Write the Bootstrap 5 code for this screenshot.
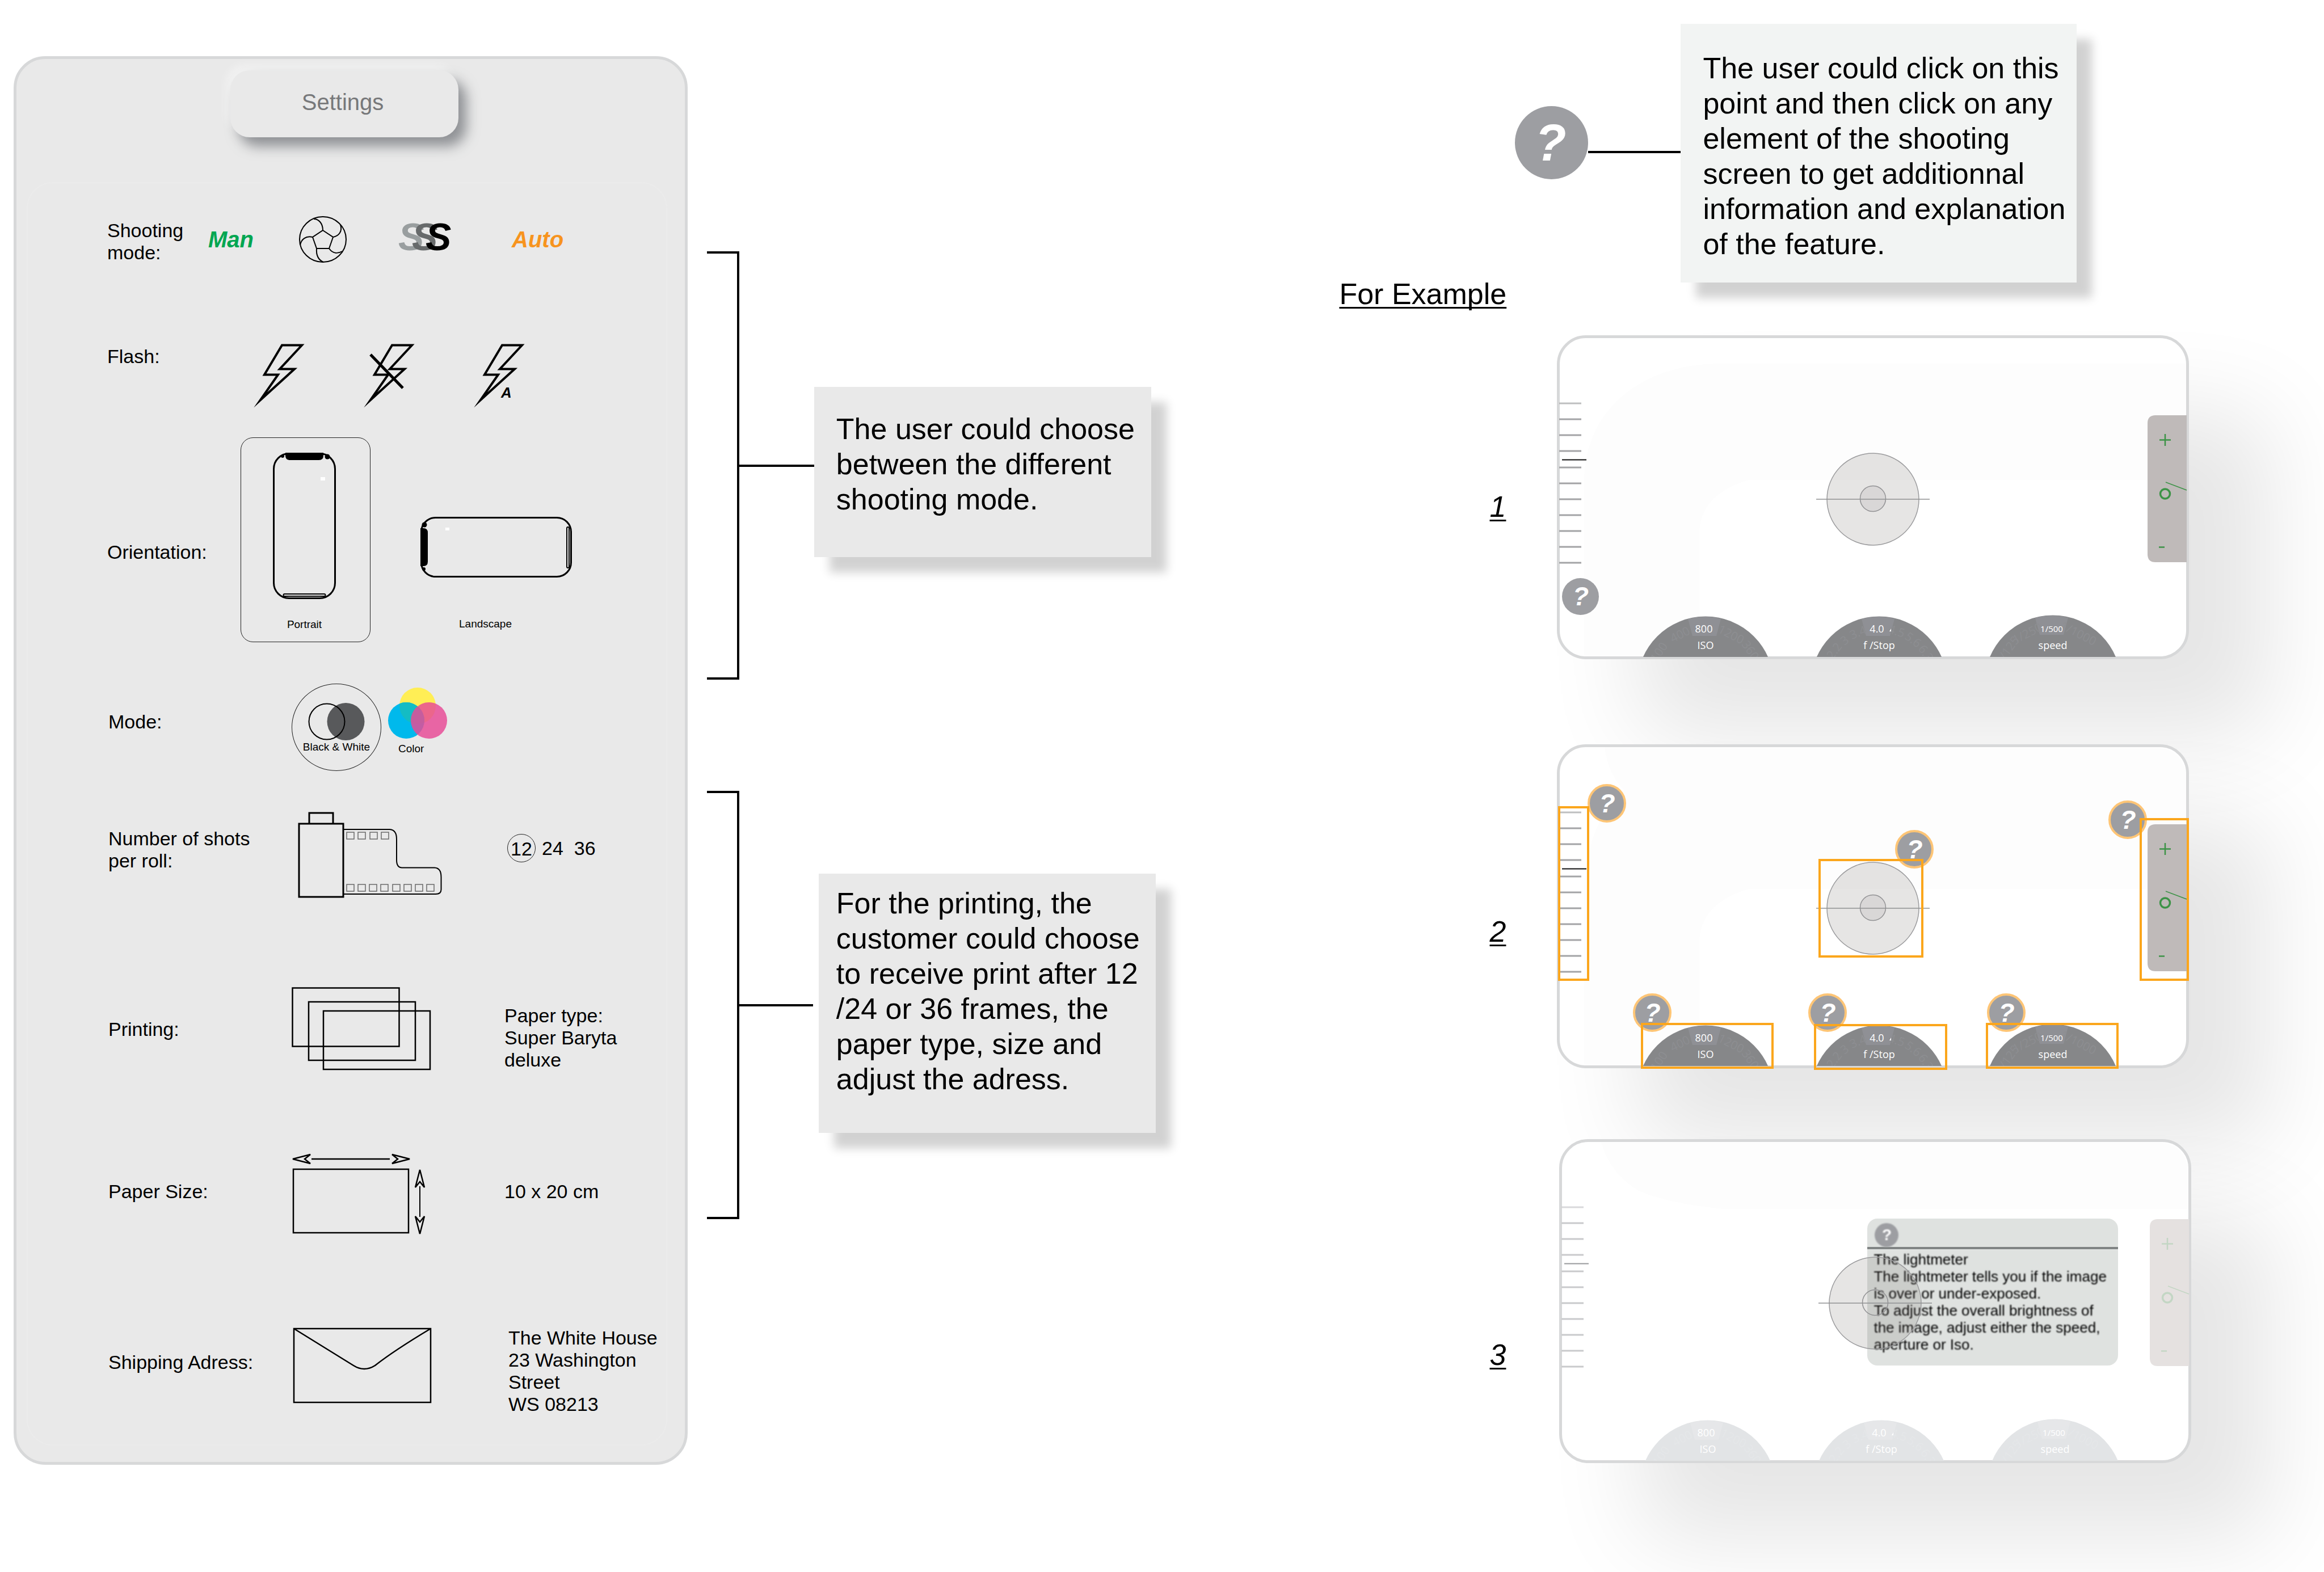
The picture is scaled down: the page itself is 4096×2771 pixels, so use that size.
<!DOCTYPE html>
<html lang="en">
<head>
<meta charset="utf-8">
<meta name="viewport" content="width=device-width, initial-scale=1">
<title>Camera app: settings and help</title>
<link rel="stylesheet" href="https://cdn.jsdelivr.net/npm/bootstrap@5.3.0/dist/css/bootstrap.min.css">
<style>
  body { font-family: "Liberation Sans", Arial, sans-serif; color: #000; background: #fff; }
  main { min-height: 100vh; }
  svg { display: block; flex: none; overflow: visible; }
  .btn { --bs-btn-color: #000; --bs-btn-padding-x: 0; --bs-btn-padding-y: 0; --bs-btn-border-width: 0; --bs-btn-border-radius: 0; text-align: left; }
  .ink { fill: none; stroke: #000; stroke-width: 3; }

  /* settings panel */
  .panel { flex: 0 0 29%; margin: 99px 0 0 24px; padding: 20px 0 29px; background: #e9e9e9; border: 5px solid #d7d8d9; border-radius: 56px; align-self: flex-start; }
  .title-btn { display: block; width: 402px; height: 118px; margin-left: 377px; padding: 0 6px 6px 0; border-radius: 34px; background: #e9e9e9; font-size: 40px; color: #77787a; text-align: center; box-shadow: 14px 16px 22px rgba(95, 98, 104, .65), -8px -10px 16px rgba(255, 255, 255, .4); }
  .panel-body { margin: 79px 31px 0 18px; padding: 55px 0 51px 140px; border: 2px solid #ebebeb; border-radius: 46px; font-size: 34px; line-height: 39px; }
  .setting { display: grid; align-items: start; }
  .setting > h2, .setting > p { font-size: 34px; line-height: 39px; font-weight: 400; margin: 0; padding-top: var(--drop, 0); }
  .print-group { padding-left: 2px; }
  .print-group .setting { grid-template-columns: 323px 375px 1fr; }
  .caption-sm { font-size: 19px; line-height: 24px; }
  .s-shooting { grid-template-columns: 178px 160px 177px 198px auto; align-items: center; height: 82px; }
  .s-shooting h2 { align-self: start; }
  .s-shooting .btn { font-size: 40px; line-height: 40px; font-weight: 700; font-style: italic; }
  .s-flash { grid-template-columns: 264px 194px 194px auto; margin-top: 146px; }
  .s-orient { grid-template-columns: 235px 317px auto; margin-top: 57px; }
  .portrait { width: 229px; height: 361px; padding: 26px 4px 0 0; border: 1px solid #222; border-radius: 22px; }
  .portrait .caption-sm { margin-top: 33px; }
  .landscape { padding-top: 140px; }
  .landscape .caption-sm { margin: 70px 0 0 68px; }
  .s-mode { margin-top: 73px; }
  .print-group .s-mode { grid-template-columns: 323px 170px auto; }
  .bw { width: 158px; height: 154px; padding-top: 34px; border: 1px solid #222; border-radius: 50%; white-space: nowrap; }
  .colour { padding-top: 7px; }
  .colour .caption-sm { margin: 6px 0 0 18px; }
  .s-shots { margin-top: 73px; }
  .shots { padding-top: 38px; gap: 19px; }
  .shots .btn { font-size: 34px; line-height: 50px; }
  .shots .picked { width: 50px; height: 50px; margin-right: -8px; margin-left: 5px; border: 1px solid #222; border-radius: 50%; text-align: center; }
  .s-print { margin-top: 157px; }
  .s-size { margin-top: 146px; }
  .s-ship { margin-top: 162px; }

  /* notes with their connectors */
  .notes { margin: 443px 0 0 34px; }
  .note { font-size: 52px; line-height: 62px; background: #e9e9e9; box-shadow: 27px 27px 16px rgba(0, 0, 0, .18); white-space: nowrap; }
  .brace { width: 57px; height: 755px; border: 4px solid #000; border-left: 0; }
  .lead-line { height: 4px; background: #000; flex: none; }
  .note-a { width: 594px; margin-top: 239px; padding: 43px 0 71px 39px; }
  .note-b { width: 594px; margin: 146px 0 0 10px; padding: 21px 0 64px 31px; }
  .notes .brace-row + .brace-row { margin-top: 196px; }

  /* help examples */
  .examples { margin: 42px 5.8% 0 auto; }
  .side-title { width: 294px; padding-top: 445px; font-size: 52px; line-height: 62px; font-weight: 400; margin: 0; white-space: nowrap; }
  .side-title, .step-no { text-decoration: underline; text-decoration-thickness: 3px; text-underline-offset: 5px; text-decoration-skip-ink: none; }
  .help { background: #9d9ea2; color: #fff; border-radius: 50%; font-weight: 700; font-style: italic; text-align: center; width: 65px; height: 65px; font-size: 46px; line-height: 65px; }
  .help-lg { width: 129px; height: 129px; font-size: 90px; line-height: 126px; margin: 145px 0 0 16px; padding-right: 4px; }
  .note-c { width: 698px; padding: 47px 0 37px 39px; background: #f2f4f3; }
  .step { display: grid; grid-template-columns: 294px 1114px; column-gap: 90px; }
  .step-no { font-size: 52px; line-height: 62px; font-style: italic; text-align: right; padding-top: var(--drop); }
  .viewfinder { height: 571px; border: 5px solid #d7d8d9; border-radius: 51px; background: #fff; box-shadow: 142px 135px 165px rgba(0, 0, 0, .1); }
  .viewfinder > * { position: absolute; }
  .viewfinder > svg { left: -5px; top: -4px; pointer-events: none; }
  .screen-live { --tick: #a3a4a6; --level: #111; --bar: #bfbab9; --sign: #3d9347; --dial: #868789; --wedge: #8f9095; --ghost: #8d8e91; }
  .screen-dim { width: 1114px; --tick: #c9cacc; --level: #999a9c; --bar: #e5e1e0; --sign: #c3d6c4; --dial: #e2e4e6; --wedge: #e6e7e9; --ghost: #e5e7e9; }
  .dial-text { font-family: "Open Sans", "Noto Sans", sans-serif; font-size: 18px; fill: #fff; text-anchor: middle; }
  .dial-ghost { font-family: "Open Sans", "Noto Sans", sans-serif; font-size: 21px; fill: var(--ghost); text-anchor: middle; }
  .ringed { width: 68px; height: 68px; line-height: 60px; border: 4px solid #fec576; transform: translate(-50%, -50%); }
  .tip { left: 538px; top: 135px; width: 442px; height: 259px; background: #dfe2e0; border-radius: 18px; font-size: 26px; line-height: 30px; color: #000; white-space: nowrap; overflow: hidden; }
  .tip-head { height: 54px; padding: 8px 0 0 13px; border-bottom: 4px solid #808484; }
  .tip-head .help { width: 42px; height: 42px; font-size: 28px; line-height: 42px; font-style: normal; filter: blur(1px); display: block; }
  .tip-body { padding: 3px 0 0 11px; filter: blur(1px); }
</style>
</head>
<body>

<!-- shared drawings -->
<svg width="0" height="0" class="position-absolute" aria-hidden="true">
  <defs>
    <g id="bolt"><path d="M44 2.500H79L40 44.500H66L6 99 37 54.500H13Z" fill="none" stroke="#000" stroke-width="4" stroke-miterlimit="12"/></g>
    <g id="phone">
      <rect x="1.500" y="1.500" width="108" height="255" rx="27" fill="none" stroke="#000" stroke-width="3"/>
      <path d="M22 0H89V5q0 8-8 8H30q-8 0-8-8Z"/>
      <circle cx="17" cy="6" r="3"/><circle cx="96" cy="7" r="4.500"/>
      <rect x="18.500" y="249" width="74" height="4" rx="2" fill="none" stroke="#000" stroke-width="2"/>
    </g>
    <g id="photos"><path class="ink" style="stroke-width:2.500" d="M1.500 1.500h188v103H1.500ZM30 26h188v103H30ZM56 42h188v103H56Z"/></g>
    <g id="arrowhead"><path d="M2 0 33 -8 23 0 33 8Z" fill="none" stroke="#000" stroke-width="2.500"/></g>
    <clipPath id="inside"><rect x="5" y="0" width="1104" height="566"/></clipPath>
    <clipPath id="yellowDisc"><circle cx="52" cy="32" r="32"/></clipPath>
    <g id="scale">
      <g stroke="var(--tick)" stroke-width="3">
        <path d="M4 147H43M4 175H43M4 203H43M4 232H43M4 260H43M4 288H43M4 316H43M4 344H43M4 372H43M4 400H43"/>
        <path d="M4 119H43" opacity=".7"/>
      </g>
      <path d="M9 218.500H52" stroke="var(--level)" stroke-width="2"/>
    </g>
    <g id="exposure">
      <path d="M1110 140H1055q-14 0-14 14V385q0 14 14 14H1110Z" fill="var(--bar)"/>
      <g fill="none" stroke="var(--sign)">
        <path d="M1062 183.500h20M1072 173v21M1061 372.500h10" stroke-width="2.500"/>
        <circle cx="1072" cy="278.500" r="8.500" stroke-width="3.500"/>
        <path d="M1073 258 1110 272" stroke-width="1.500"/>
      </g>
    </g>
    <g id="dials">
      <g clip-path="url(#inside)">
        <g fill="var(--dial)"><circle cx="262" cy="615" r="120.500"/><circle cx="568" cy="615" r="120.500"/><circle cx="874" cy="613" r="120.500"/></g>
        <path fill="var(--wedge)" d="M231 499q31-8 58 0L281 529H239ZM537 499q31-8 58 0L587 529H545ZM843 497q31-8 58 0L893 527H851Z"/>
        <g class="dial-ghost">
          <g transform="translate(262 615)"><text transform="rotate(-55)" y="-93">100</text><text transform="rotate(-27)" y="-92">400</text><text transform="rotate(27)" y="-92">1200</text><text transform="rotate(56)" y="-92">3600</text></g>
          <g transform="translate(568 615)"><text transform="rotate(-53)" y="-92">2.2</text><text transform="rotate(-38)" y="-92">3</text><text transform="rotate(-22)" y="-92">3.4</text><text transform="rotate(18)" y="-92">4.5</text><text transform="rotate(37)" y="-92">5.6</text><text transform="rotate(56)" y="-92">6.3</text></g>
          <g transform="translate(874 613)"><text transform="rotate(-54)" y="-92">1/125</text><text transform="rotate(-27)" y="-92">1/250</text><text transform="rotate(27)" y="-92">1/1000</text></g>
        </g>
      </g>
      <g class="dial-text">
        <text x="259" y="523">800</text><text x="262" y="552">ISO</text>
        <text x="564" y="523">4.0</text><text x="568" y="552">f /Stop</text>
        <text x="872" y="522" style="font-size:15px">1/500</text><text x="874" y="552">speed</text>
        <path d="M586 521l3-5v5Z"/>
      </g>
    </g>
    <g id="target">
      <circle cx="557" cy="288" r="81" fill="rgb(105,98,92)" fill-opacity=".17" stroke="#9b9b9d" stroke-width="1.500"/>
      <circle cx="557" cy="287" r="22.500" fill="rgb(105,98,110)" fill-opacity="var(--core, .1)" stroke="#929294" stroke-width="1.500"/>
      <path d="M457 288H657" stroke="#8f9092" stroke-width="1.500"/>
    </g>
  </defs>
</svg>

<main class="d-flex align-items-start overflow-hidden">

  <section class="panel" aria-label="Settings">
    <button type="button" class="btn title-btn">Settings</button>

    <div class="panel-body">
      <div class="setting s-shooting">
        <h2 style="--drop:9px">Shooting mode:</h2>
        <button type="button" class="btn" style="color:#00a651">Man</button>
        <button type="button" class="btn" aria-label="Sport">
          <svg width="84" height="82" viewBox="0 0 84 82" fill="none" stroke="#000" stroke-width="2">
            <ellipse cx="42" cy="41" rx="41" ry="40"/>
            <path d="M42 25 60 37 53 57H31L24 37ZM42 25C42 13 35 5 26 5M60 37C70 35 77 27 73 15M53 57C60 67 69 66 76 62M31 57C30 69 34 77 43 81M24 37C12 34 4 41 2 51"/>
          </svg>
        </button>
        <button type="button" class="btn" aria-label="Burst">
          <svg width="92" height="82" viewBox="0 0 92 82" font-family="Liberation Sans, Arial, sans-serif" font-size="68" font-weight="700" font-style="italic">
            <text x="-2" y="60" fill="#999e9f">S</text><text x="22" y="60" fill="#676a6b">S</text><text x="46" y="60">S</text>
          </svg>
        </button>
        <button type="button" class="btn" style="color:#f7941e">Auto</button>
      </div>

      <div class="setting s-flash">
        <h2 style="--drop:3px">Flash:</h2>
        <button type="button" class="btn" aria-label="Flash on"><svg width="84" height="108"><use href="#bolt"/></svg></button>
        <button type="button" class="btn" aria-label="Flash off"><svg width="84" height="108"><use href="#bolt"/><path d="M6 19 63 78" stroke="#000" stroke-width="5"/></svg></button>
        <button type="button" class="btn" aria-label="Flash automatic"><svg width="84" height="108"><use href="#bolt"/><text x="42" y="95" font-size="26" font-weight="700" font-style="italic">A</text></svg></button>
      </div>

      <div class="setting s-orient">
        <h2 style="--drop:183px">Orientation:</h2>
        <button type="button" class="btn portrait d-flex flex-column align-items-center">
          <svg width="111" height="258"><use href="#phone"/><rect x="84" y="43" width="8" height="6" fill="#fff"/></svg>
          <span class="caption-sm">Portrait</span>
        </button>
        <button type="button" class="btn landscape d-flex flex-column align-items-start">
          <svg width="267" height="107">
            <rect x="1.500" y="1.500" width="264" height="104" rx="25" fill="none" stroke="#000" stroke-width="3"/>
            <path d="M0 20H5q8 0 8 8V79q0 8-8 8H0Z"/>
            <circle cx="7" cy="14" r="4.500"/><circle cx="6" cy="92" r="3"/>
            <rect x="258" y="18" width="4" height="72" rx="2" fill="none" stroke="#000" stroke-width="2"/>
            <rect x="44" y="19" width="7" height="5" fill="#fff"/>
          </svg>
          <span class="caption-sm">Landscape</span>
        </button>
      </div>

      <div class="print-group">
        <div class="setting s-mode">
          <h2 style="--drop:48px">Mode:</h2>
          <button type="button" class="btn bw d-flex flex-column align-items-center">
            <svg width="100" height="65"><circle cx="66.500" cy="32" r="33" fill="#58595b"/><circle cx="33" cy="32" r="31.500" fill="none" stroke="#000" stroke-width="2"/></svg>
            <span class="caption-sm">Black &amp; White</span>
          </button>
          <button type="button" class="btn colour d-flex flex-column align-items-start">
            <svg width="104" height="90">
              <circle cx="52" cy="32" r="32" fill="#ffee55"/>
              <circle cx="32" cy="58" r="32" fill="#00b9ec"/>
              <circle cx="32" cy="58" r="32" fill="#14bcc4" clip-path="url(#yellowDisc)"/>
              <circle cx="72" cy="58" r="32" fill="#e74b96" fill-opacity=".84"/>
            </svg>
            <span class="caption-sm">Color</span>
          </button>
        </div>

        <div class="setting s-shots">
          <h2 style="--drop:27px">Number of shots<br>per roll:</h2>
          <svg width="266" height="151" viewBox="0 0 266 151">
            <g class="ink" style="stroke-width:2">
              <path d="M31 20V1H73V20M13 20H91V149H13Z" stroke-width="3"/>
              <path d="M91 30H173Q185 31 185 47V84Q185 97 194 97.500H252Q263.500 98 263.500 114V136Q263.500 144 254 144H91"/>
            </g>
            <path fill="none" stroke="#6a6a6a" stroke-width="1.500" d="M97 35h13v12h-13ZM117 35h13v12h-13ZM138 35h13v12h-13ZM158 35h13v12h-13ZM97 127h13v12h-13ZM117 127h13v12h-13ZM137 127h13v12h-13ZM157 127h13v12h-13ZM178 127h13v12h-13ZM198 127h13v12h-13ZM218 127h13v12h-13ZM238 127h13v12h-13Z"/>
          </svg>
          <div class="shots d-flex">
            <button type="button" class="btn picked">12</button>
            <button type="button" class="btn">24</button>
            <button type="button" class="btn">36</button>
          </div>
        </div>

        <div class="setting s-print">
          <h2 style="--drop:55px">Printing:</h2>
          <svg width="246" height="146"><use href="#photos"/></svg>
          <p style="--drop:31px">Paper type:<br>Super Baryta<br>deluxe</p>
        </div>

        <div class="setting s-size">
          <h2 style="--drop:47px">Paper Size:</h2>
          <svg width="236" height="143">
            <rect x="3" y="27" width="203" height="112" class="ink" style="stroke-width:2.500"/>
            <use href="#arrowhead" transform="translate(0 9)"/><use href="#arrowhead" transform="translate(210 9) rotate(180)"/>
            <use href="#arrowhead" transform="translate(226 26) rotate(90)"/><use href="#arrowhead" transform="translate(226 143) rotate(-90)"/>
            <path class="ink" style="stroke-width:2.500" d="M35 9H173"/><path class="ink" style="stroke-width:2" d="M226 57V111"/>
          </svg>
          <p style="--drop:47px">10 x 20 cm</p>
        </div>

        <div class="setting s-ship">
          <h2 style="--drop:43px">Shipping Adress:</h2>
          <svg width="248" height="135">
            <path class="ink" style="stroke-width:2.500" d="M4 3H245V133H4ZM4 3 109 68Q128 80 147 68C175 46 210 24 245 3"/>
          </svg>
          <address class="mb-0" style="line-height:39px; padding-left:7px">The White House<br>23 Washington<br>Street<br>WS 08213</address>
        </div>
      </div>
    </div>
  </section>

  <section class="notes" aria-label="Notes on the settings">
    <div class="brace-row d-flex align-items-start">
      <div class="brace"></div>
      <div class="lead-line align-self-center" style="width:132px"></div>
      <p class="note note-a mb-0">The user could choose<br>between the different<br>shooting mode.</p>
    </div>
    <div class="brace-row d-flex align-items-start">
      <div class="brace"></div>
      <div class="lead-line align-self-center" style="width:130px"></div>
      <p class="note note-b mb-0">For the printing, the<br>customer could choose<br>to receive print after 12<br>/24 or 36 frames, the<br>paper type, size and<br>adjust the adress.</p>
    </div>
  </section>

  <section class="examples" aria-label="Help examples">
    <div class="d-flex align-items-start">
      <h2 class="side-title">For Example</h2>
      <button type="button" class="btn help help-lg">?</button>
      <div class="lead-line" style="width:163px; margin-top:224px"></div>
      <p class="note note-c mb-0">The user could click on this<br>point and then click on any<br>element of the shooting<br>screen to get additionnal<br>information and explanation<br>of the feature.</p>
    </div>

    <div class="step" style="margin-top:42px">
      <div class="step-no" style="--drop:271px">1</div>
      <div class="viewfinder screen-live position-relative">
        <svg width="1114" height="570" role="img" aria-label="Shooting screen">
          <path fill="#fdfdfd" d="M48 565V253C50 130 150 49 288 49H1109V254H338Q251 280 251 350V565Z"/>
          <use href="#scale"/><use href="#exposure"/><use href="#dials"/><use href="#target"/>
        </svg>
        <button type="button" class="btn help" style="left:4px; top:423px">?</button>
      </div>
    </div>

    <div class="step" style="margin-top:150px">
      <div class="step-no" style="--drop:299px">2</div>
      <div class="viewfinder screen-live position-relative">
        <svg width="1114" height="570" role="img" aria-label="Shooting screen with help points">
          <path fill="#fdfdfd" d="M48 565V253C52 170 80 110 118 80Q90 50 84 5H1060Q1100 8 1109 50V254H338Q251 280 251 350V565Z"/>
          <use href="#scale"/><use href="#exposure"/><use href="#dials"/><use href="#target"/>
        </svg>
        <button type="button" class="btn help ringed" style="left:83px; top:99px">?</button>
        <button type="button" class="btn help ringed" style="left:625px; top:180px">?</button>
        <button type="button" class="btn help ringed" style="left:1001px; top:128px">?</button>
        <button type="button" class="btn help ringed" style="left:163px; top:468px">?</button>
        <button type="button" class="btn help ringed" style="left:472px; top:468px">?</button>
        <button type="button" class="btn help ringed" style="left:787px; top:468px">?</button>
        <svg width="1114" height="570" fill="none" stroke="#fba61c" stroke-width="4" aria-hidden="true">
          <rect x="4" y="110" width="51" height="304"/><rect x="463" y="203" width="181" height="170"/><rect x="1029" y="131" width="83" height="283"/>
          <rect x="150" y="492" width="230" height="77"/><rect x="455" y="494" width="231" height="77"/><rect x="758" y="492" width="230" height="77"/>
        </svg>
      </div>
    </div>

    <div class="step" style="margin-top:125px">
      <div class="step-no" style="--drop:349px">3</div>
      <div class="viewfinder screen-dim position-relative ms-1">
        <svg width="1114" height="570" role="img" aria-label="Dimmed shooting screen">
          <path fill="#fdfdfd" d="M74 5H1060Q1100 8 1109 50V122H288Q190 112 140 90Q90 60 74 5Z"/>
          <use href="#scale"/><use href="#exposure"/><use href="#dials"/>
        </svg>
        <div class="tip">
          <div class="tip-head"><button type="button" class="btn help">?</button></div>
          <div class="tip-body">The lightmeter<br>The lightmeter tells you if the image<br>is over or under-exposed.<br>To adjust the overall brightness of<br>the image, adjust either the speed,<br>aperture or Iso.</div>
        </div>
        <svg width="1114" height="570" style="--core:0" aria-hidden="true"><use href="#target"/></svg>
      </div>
    </div>
  </section>
</main>

<script src="https://cdn.jsdelivr.net/npm/bootstrap@5.3.0/dist/js/bootstrap.bundle.min.js"></script>
</body>
</html>
